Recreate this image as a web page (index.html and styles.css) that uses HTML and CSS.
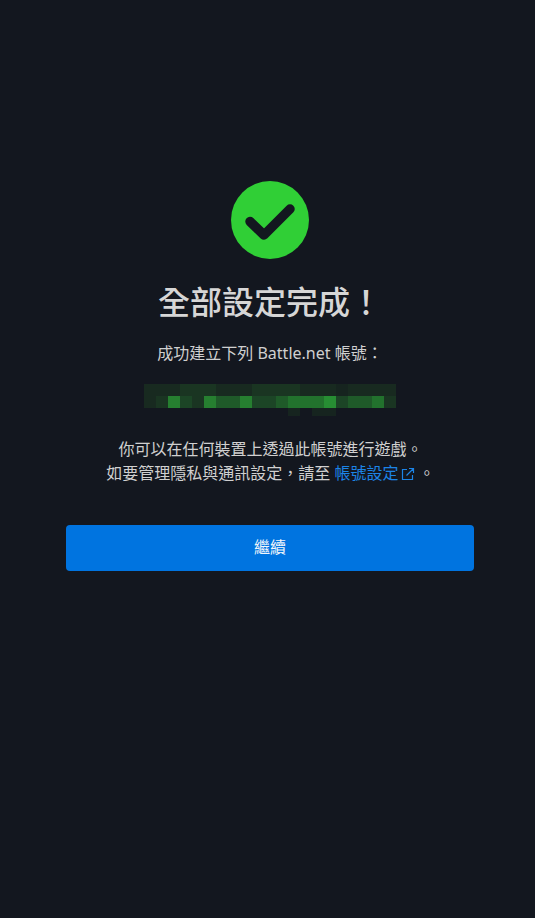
FILE: index.html
```html
<!DOCTYPE html>
<html lang="zh-Hant">
<head>
<meta charset="utf-8">
<title>全部設定完成！</title>
<link rel="stylesheet" href="styles.css">
</head>
<body>
<main class="page">
  <svg class="check" viewBox="0 0 78 78" aria-hidden="true">
    <circle class="check-disc" cx="39" cy="39" r="39"/>
    <path class="check-mark" d="M19 40.5 L33 54 L59 28"/>
  </svg>
  <h1 class="title">全部設定完成！</h1>
  <p class="lead">成功建立下列 Battle.net 帳號：</p>
  <svg class="blur" viewBox="0 0 252 32" shape-rendering="crispEdges" aria-hidden="true">
    <rect class="s1" x="0" y="0" width="36" height="12"/>
    <rect class="s2" x="36" y="0" width="36" height="12"/>
    <rect class="s1" x="72" y="0" width="36" height="12"/>
    <rect class="s2" x="108" y="0" width="48" height="12"/>
    <rect class="s1" x="156" y="0" width="36" height="12"/>
    <rect class="s0" x="192" y="0" width="12" height="12"/>
    <rect class="s1" x="204" y="0" width="48" height="12"/>
    <rect class="s1" x="0" y="12" width="12" height="12"/>
    <rect class="s2" x="12" y="12" width="12" height="12"/>
    <rect class="s6" x="24" y="12" width="12" height="12"/>
    <rect class="s3" x="36" y="12" width="12" height="12"/>
    <rect class="s2" x="48" y="12" width="12" height="12"/>
    <rect class="s6" x="60" y="12" width="12" height="12"/>
    <rect class="s4" x="72" y="12" width="24" height="12"/>
    <rect class="s6" x="96" y="12" width="12" height="12"/>
    <rect class="s3" x="108" y="12" width="24" height="12"/>
    <rect class="s4" x="132" y="12" width="12" height="12"/>
    <rect class="s5" x="144" y="12" width="36" height="12"/>
    <rect class="s7" x="180" y="12" width="12" height="12"/>
    <rect class="s3" x="192" y="12" width="12" height="12"/>
    <rect class="s4" x="204" y="12" width="24" height="12"/>
    <rect class="s5" x="228" y="12" width="12" height="12"/>
    <rect class="s2" x="240" y="12" width="12" height="12"/>
    <rect class="s0" x="144" y="24" width="12" height="8"/>
    <rect class="s0" x="168" y="24" width="24" height="8"/>
  </svg>
  <p class="info">你可以在任何裝置上透過此帳號進行遊戲。<br>如要管理隱私與通訊設定，請至 <a class="link" href="#">帳號設定<svg class="ext" viewBox="0 0 14 14" aria-hidden="true"><path d="M6 2.5H1.5V12.5H11.5V8M8 1.5H12.5V6M12.5 1.5L5.5 8.5"/></svg></a> 。</p>
  <button class="btn" type="button">繼續</button>
</main>
</body>
</html>
```

FILE: styles.css
```css
* { box-sizing: border-box; }
html, body { margin: 0; height: 100%; }
body {
  background: #13171f;
  color: #d0d0d0;
  font-family: "Noto Sans", "Noto Sans CJK TC", sans-serif;
  overflow: hidden;
}
.page {
  display: flex;
  flex-direction: column;
  align-items: center;
  padding: 181px 61px 0 66px;
}
.check { display: block; width: 78px; height: 78px; }
.check-disc { fill: #30cf36; }
.check-mark {
  fill: none;
  stroke: #13171f;
  stroke-width: 9.5;
  stroke-linecap: round;
  stroke-linejoin: round;
}
.title {
  margin: 21px 0 0;
  font-size: 32px;
  line-height: 44px;
  font-weight: 500;
  color: #d6d6d6;
}
.lead {
  margin: 17px 0 0;
  font-size: 16px;
  line-height: 24px;
  color: #d0d0d0;
}
.blur { display: block; width: 252px; height: 32px; margin-top: 19px; }
.s0 { fill: #16241f; }
.s1 { fill: #182a20; }
.s2 { fill: #1a3522; }
.s3 { fill: #1c4526; }
.s4 { fill: #1f5a29; }
.s5 { fill: #22722d; }
.s6 { fill: #267f30; }
.s7 { fill: #278e33; }
.info {
  margin: 21px 0 0 1px;
  font-size: 16px;
  line-height: 24px;
  text-align: center;
  color: #d0d0d0;
}
.link { color: #1c84e6; text-decoration: none; }
.ext {
  display: inline-block;
  width: 14px;
  height: 14px;
  margin-left: 2px;
  vertical-align: -2px;
  fill: none;
  stroke: #1c84e6;
  stroke-width: 1.2;
}
.btn {
  display: block;
  width: 100%;
  height: 46px;
  margin-top: 40px;
  padding: 0 0 4px;
  border: 0;
  border-radius: 4px;
  background: #0074e0;
  color: #f2f6fb;
  font-family: inherit;
  font-size: 16px;
  font-weight: 400;
}
```
